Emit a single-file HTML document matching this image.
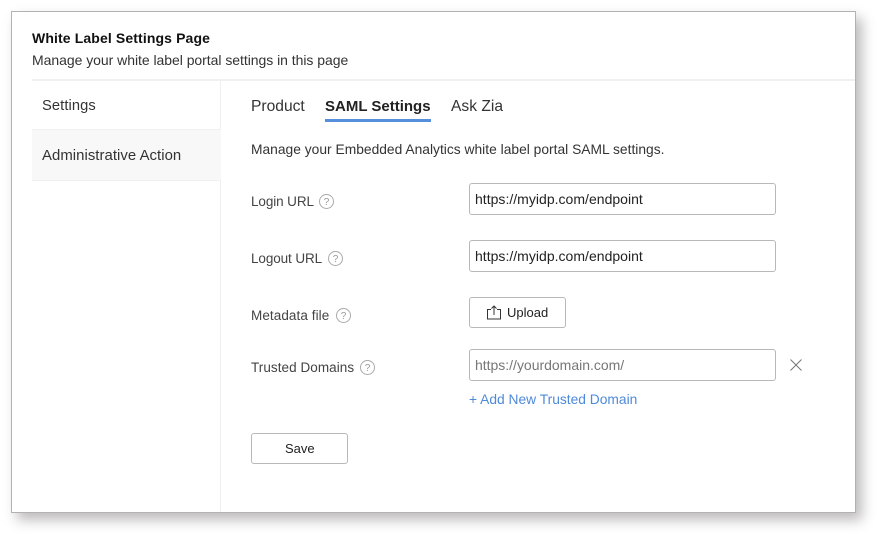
<!DOCTYPE html>
<html><head><meta charset="utf-8"><style>
html,body{margin:0;padding:0;width:877px;height:534px;background:#fff;overflow:hidden}
body{position:relative;font-family:"Liberation Sans",sans-serif;color:#222}
.card{position:absolute;left:11px;top:11px;width:843px;height:500px;background:#fff;border:1px solid #b4b1b1;box-shadow:6px 7px 12px rgba(90,85,85,.4)}
.t{position:absolute;white-space:nowrap;line-height:18px}
.box{position:absolute;box-sizing:border-box;background:#fff;border:1px solid #b8b8b8;border-radius:3px}
svg{position:absolute}
circle{fill:none}
</style></head><body>
<div class="card"></div>
<div class="t" style="left:32px;top:29px;font-size:14px;font-weight:bold;color:#111;letter-spacing:.12px">White Label Settings Page</div>
<div class="t" style="left:32px;top:51px;font-size:14px;color:#333;letter-spacing:-.04px">Manage your white label portal settings in this page</div>
<div style="position:absolute;left:32px;top:79px;width:823px;height:2px;background:#f0f0f0"></div>
<div style="position:absolute;left:220px;top:81px;width:1px;height:431px;background:#efefef"></div>
<div style="position:absolute;left:32px;top:129px;width:189px;height:52px;box-sizing:border-box;background:#f8f8f8;border-top:1px solid #f0f0f0;border-bottom:1px solid #f0f0f0"></div>
<div class="t" style="left:42px;top:97px;font-size:14.7px;color:#333;letter-spacing:.1px">Settings</div>
<div class="t" style="left:42px;top:147px;font-size:14.9px;color:#333;letter-spacing:.05px">Administrative Action</div>
<div class="t" style="left:251px;top:98px;font-size:15.6px;color:#333">Product</div>
<div class="t" style="left:325px;top:98px;font-size:15px;font-weight:bold;color:#222">SAML Settings</div>
<div style="position:absolute;left:325px;top:119px;width:106px;height:3px;background:#5690dd"></div>
<div class="t" style="left:451px;top:98px;font-size:15.6px;color:#333">Ask Zia</div>
<div class="t" style="left:251px;top:141px;font-size:13.8px;color:#333;letter-spacing:.01px">Manage your Embedded Analytics white label portal SAML settings.</div>
<div class="t" style="left:251px;top:193px;font-size:13.5px;color:#444;letter-spacing:-.1px">Login URL</div>
<div class="t" style="left:251px;top:250px;font-size:13.5px;color:#444;letter-spacing:-.1px">Logout URL</div>
<div class="t" style="left:251px;top:307px;font-size:13.5px;color:#444;letter-spacing:.08px">Metadata file</div>
<div class="t" style="left:251px;top:359px;font-size:13.5px;color:#444;letter-spacing:.06px">Trusted Domains</div>
<svg style="left:319px;top:194px" width="16" height="16"><circle cx="7.5" cy="7.5" r="7" stroke="#aaa"/><text x="7.5" y="11" font-size="10" fill="#999" text-anchor="middle" font-family="Liberation Sans">?</text></svg>
<svg style="left:328px;top:251px" width="16" height="16"><circle cx="7.5" cy="7.5" r="7" stroke="#aaa"/><text x="7.5" y="11" font-size="10" fill="#999" text-anchor="middle" font-family="Liberation Sans">?</text></svg>
<svg style="left:336px;top:308px" width="16" height="16"><circle cx="7.5" cy="7.5" r="7" stroke="#aaa"/><text x="7.5" y="11" font-size="10" fill="#999" text-anchor="middle" font-family="Liberation Sans">?</text></svg>
<svg style="left:360px;top:360px" width="16" height="16"><circle cx="7.5" cy="7.5" r="7" stroke="#aaa"/><text x="7.5" y="11" font-size="10" fill="#999" text-anchor="middle" font-family="Liberation Sans">?</text></svg>
<div class="box" style="left:469px;top:183px;width:307px;height:32px"></div>
<div class="t" style="left:475px;top:190px;font-size:14px;color:#222;letter-spacing:.02px">https://myidp.com/endpoint</div>
<div class="box" style="left:469px;top:240px;width:307px;height:32px"></div>
<div class="t" style="left:475px;top:247px;font-size:14px;color:#222;letter-spacing:.02px">https://myidp.com/endpoint</div>
<div class="box" style="left:469px;top:297px;width:97px;height:31px"></div>
<svg style="left:486px;top:305px" width="16" height="15" fill="none" stroke="#333" stroke-width="1"><path d="M5 4.5H1.5v9.5h13V4.5H11M8 10V1M5.5 3.5L8 1l2.5 2.5"/></svg>
<div class="t" style="left:507px;top:304px;font-size:13px;color:#222">Upload</div>
<div class="box" style="left:469px;top:349px;width:307px;height:32px"></div>
<div class="t" style="left:475px;top:356px;font-size:14px;color:#777;letter-spacing:-.01px">https://yourdomain.com/</div>
<svg style="left:789px;top:358px" width="14" height="14" fill="none" stroke="#777" stroke-width="1"><path d="M1.5 1.5l11 11M12.5 1.5l-11 11"/></svg>
<div class="t" style="left:469px;top:391px;font-size:13.8px;color:#4e8ada;letter-spacing:0">+ Add New Trusted Domain</div>
<div class="box" style="left:251px;top:433px;width:97px;height:31px"></div>
<div class="t" style="left:285px;top:440px;font-size:13px;color:#222">Save</div>
</body></html>
